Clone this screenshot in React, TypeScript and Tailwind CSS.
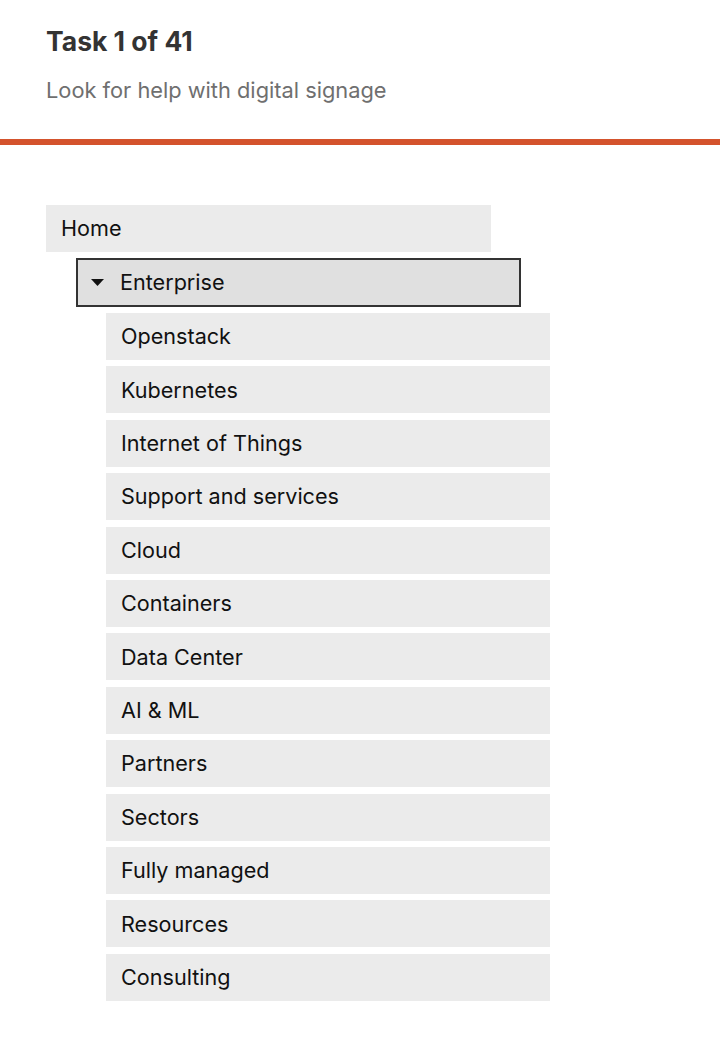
import React from "react";

const children = [
  "Openstack",
  "Kubernetes",
  "Internet of Things",
  "Support and services",
  "Cloud",
  "Containers",
  "Data Center",
  "AI & ML",
  "Partners",
  "Sectors",
  "Fully managed",
  "Resources",
  "Consulting",
];

export default function App() {
  return (
    <div className="w-[720px] h-[1064px] bg-white" style={{ fontFamily: "Inter, 'Open Sans', sans-serif" }}>
      <div className="px-[46px] pt-[25px]">
        <h1 className="text-[26.5px] leading-[32px] font-bold text-[#333333]">Task 1 of 41</h1>
        <p className="mt-[19px] text-[21.8px] leading-[28px] text-[#6f6f6f]">Look for help with digital signage</p>
      </div>
      <div className="mt-[35px] h-[6px] bg-[#d4532d]" />
      <div className="pl-[46px] pt-[60px] flex flex-col">
        <div className="w-[445px] h-[47px] bg-[#ebebeb] flex items-center pl-[15px] text-[21.6px] text-[#111]">Home</div>
        <div className="mt-[6px] ml-[30px] w-[445px] h-[49px] bg-[#e0e0e0] border-2 border-[#333] flex items-center pl-[13px] text-[21.6px] text-[#111]">
          <svg width="13" height="7" viewBox="0 0 13 7" className="mr-[16px]">
            <polygon points="0,0 13,0 6.5,7" fill="#111" />
          </svg>
          Enterprise
        </div>
        <div className="mt-[6px] ml-[60px] flex flex-col gap-[6.4px]">
          {children.map((c) => (
            <div key={c} className="w-[444px] h-[47px] bg-[#ebebeb] flex items-center pl-[15px] text-[21.6px] text-[#111]">
              {c}
            </div>
          ))}
        </div>
      </div>
    </div>
  );
}
